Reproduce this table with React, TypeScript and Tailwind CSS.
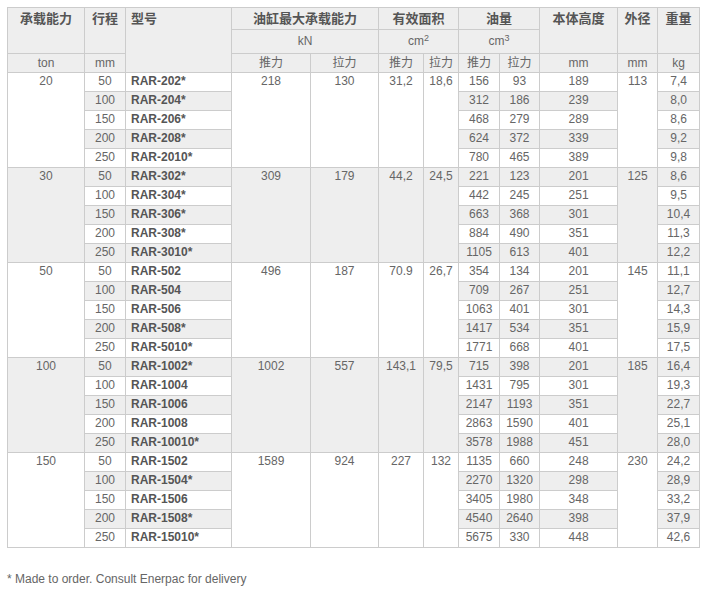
import { Fragment } from "react";

type Row = [number, string, number, number, number, string];

type Group = {
  ton: number;
  push: number;
  pull: number;
  areaPush: string;
  areaPull: string;
  od: number;
  rows: Row[];
};

const groups: Group[] = [
  {
    ton: 20,
    push: 218,
    pull: 130,
    areaPush: "31,2",
    areaPull: "18,6",
    od: 113,
    rows: [
      [50, "RAR-202*", 156, 93, 189, "7,4"],
      [100, "RAR-204*", 312, 186, 239, "8,0"],
      [150, "RAR-206*", 468, 279, 289, "8,6"],
      [200, "RAR-208*", 624, 372, 339, "9,2"],
      [250, "RAR-2010*", 780, 465, 389, "9,8"],
    ],
  },
  {
    ton: 30,
    push: 309,
    pull: 179,
    areaPush: "44,2",
    areaPull: "24,5",
    od: 125,
    rows: [
      [50, "RAR-302*", 221, 123, 201, "8,6"],
      [100, "RAR-304*", 442, 245, 251, "9,5"],
      [150, "RAR-306*", 663, 368, 301, "10,4"],
      [200, "RAR-308*", 884, 490, 351, "11,3"],
      [250, "RAR-3010*", 1105, 613, 401, "12,2"],
    ],
  },
  {
    ton: 50,
    push: 496,
    pull: 187,
    areaPush: "70.9",
    areaPull: "26,7",
    od: 145,
    rows: [
      [50, "RAR-502", 354, 134, 201, "11,1"],
      [100, "RAR-504", 709, 267, 251, "12,7"],
      [150, "RAR-506", 1063, 401, 301, "14,3"],
      [200, "RAR-508*", 1417, 534, 351, "15,9"],
      [250, "RAR-5010*", 1771, 668, 401, "17,5"],
    ],
  },
  {
    ton: 100,
    push: 1002,
    pull: 557,
    areaPush: "143,1",
    areaPull: "79,5",
    od: 185,
    rows: [
      [50, "RAR-1002*", 715, 398, 201, "16,4"],
      [100, "RAR-1004", 1431, 795, 301, "19,3"],
      [150, "RAR-1006", 2147, 1193, 351, "22,7"],
      [200, "RAR-1008", 2863, 1590, 401, "25,1"],
      [250, "RAR-10010*", 3578, 1988, 451, "28,0"],
    ],
  },
  {
    ton: 150,
    push: 1589,
    pull: 924,
    areaPush: "227",
    areaPull: "132",
    od: 230,
    rows: [
      [50, "RAR-1502", 1135, 660, 248, "24,2"],
      [100, "RAR-1504*", 2270, 1320, 298, "28,9"],
      [150, "RAR-1506", 3405, 1980, 348, "33,2"],
      [200, "RAR-1508*", 4540, 2640, 398, "37,9"],
      [250, "RAR-15010*", 5675, 330, 448, "42,6"],
    ],
  },
];

const widths = [77, 41, 106, 79, 68, 45, 35, 41, 40, 78, 40, 42];

const th = "border border-[#cccccc] bg-[#eeeeee] p-0 align-top text-center";
const head = "font-bold text-[13px] text-[#555555]";
const sub = "border border-[#cccccc] bg-[#eeeeee] p-0 text-center font-normal leading-[17px]";
const td = "border border-[#cccccc] p-0 align-top text-center leading-[17px]";

export default function App() {
  let index = 0;

  return (
    <div
      className="bg-white pl-[7px] pt-[7px] text-[12px] text-[#666666]"
      style={{ fontFamily: '"Liberation Sans", Arial, "Noto Sans CJK SC", sans-serif' }}
    >
      <table className="w-[692px] table-fixed border-collapse">
        <colgroup>
          {widths.map((w, i) => (
            <col key={i} style={{ width: w }} />
          ))}
        </colgroup>
        <thead>
          <tr className="h-[22px]">
            <th rowSpan={2} className={th}>
              <div className={`${head} pt-[2px] leading-[18px]`}>承载能力</div>
            </th>
            <th rowSpan={2} className={th}>
              <div className={`${head} pt-[2px] leading-[18px]`}>行程</div>
            </th>
            <th rowSpan={3} className={`${th} text-left`}>
              <div className={`${head} pl-[5px] pt-[2px] leading-[18px]`}>型号</div>
            </th>
            <th colSpan={2} className={th}>
              <div className={`${head} pt-[2px] leading-[18px]`}>油缸最大承载能力</div>
            </th>
            <th colSpan={2} className={th}>
              <div className={`${head} pt-[2px] leading-[18px]`}>有效面积</div>
            </th>
            <th colSpan={2} className={th}>
              <div className={`${head} pt-[2px] leading-[18px]`}>油量</div>
            </th>
            <th rowSpan={2} className={th}>
              <div className={`${head} pt-[2px] leading-[18px]`}>本体高度</div>
            </th>
            <th rowSpan={2} className={th}>
              <div className={`${head} pt-[2px] leading-[18px]`}>外径</div>
            </th>
            <th rowSpan={2} className={th}>
              <div className={`${head} pt-[2px] leading-[18px]`}>重量</div>
            </th>
          </tr>
          <tr className="h-[24px]">
            <th colSpan={2} className={`${sub} align-middle`}>
              kN
            </th>
            <th colSpan={2} className={`${sub} align-middle`}>
              cm<sup className="text-[9px]">2</sup>
            </th>
            <th colSpan={2} className={`${sub} align-middle`}>
              cm<sup className="text-[9px]">3</sup>
            </th>
          </tr>
          <tr className="h-[19px]">
            {["ton", "mm"].map((t) => (
              <th key={t} className={sub}>
                {t}
              </th>
            ))}
            {["推力", "拉力", "推力", "拉力", "推力", "拉力", "mm", "mm", "kg"].map((t, i) => (
              <th key={i} className={sub}>
                {t}
              </th>
            ))}
          </tr>
        </thead>
        <tbody>
          {groups.map((g) => (
            <Fragment key={g.ton}>
              {g.rows.map((r, j) => {
                const gray = index++ % 2 === 1;
                const bg = gray ? "bg-[#eeeeee]" : "bg-white";
                const span = g.rows.length;
                return (
                  <tr key={r[1]} className={`h-[19px] ${bg}`}>
                    {j === 0 && (
                      <td rowSpan={span} className={td}>
                        {g.ton}
                      </td>
                    )}
                    <td className={td}>{r[0]}</td>
                    <td className={`${td} pl-[5px] text-left font-bold text-[#555555]`}>{r[1]}</td>
                    {j === 0 && (
                      <>
                        <td rowSpan={span} className={td}>
                          {g.push}
                        </td>
                        <td rowSpan={span} className={td}>
                          {g.pull}
                        </td>
                        <td rowSpan={span} className={td}>
                          {g.areaPush}
                        </td>
                        <td rowSpan={span} className={td}>
                          {g.areaPull}
                        </td>
                      </>
                    )}
                    <td className={td}>{r[2]}</td>
                    <td className={td}>{r[3]}</td>
                    <td className={td}>{r[4]}</td>
                    {j === 0 && (
                      <td rowSpan={span} className={td}>
                        {g.od}
                      </td>
                    )}
                    <td className={td}>{r[5]}</td>
                  </tr>
                );
              })}
            </Fragment>
          ))}
        </tbody>
      </table>
      <p className="mt-[22px] leading-[18px]">* Made to order. Consult Enerpac for delivery</p>
    </div>
  );
}
